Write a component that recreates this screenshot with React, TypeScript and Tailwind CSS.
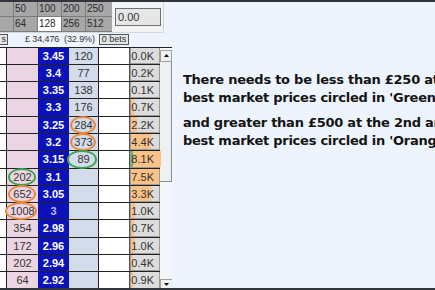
const rows = [
  { lay: '', price: '3.45', back: '120', vol: '0.0K', bar: 0 },
  { lay: '', price: '3.4', back: '77', vol: '0.2K', bar: 0 },
  { lay: '', price: '3.35', back: '138', vol: '0.1K', bar: 0 },
  { lay: '', price: '3.3', back: '176', vol: '0.7K', bar: 3 },
  { lay: '', price: '3.25', back: '284', vol: '2.2K', bar: 6, ring: 'back-o' },
  { lay: '', price: '3.2', back: '373', vol: '4.4K', bar: 20, ring: 'back-o' },
  { lay: '', price: '3.15', back: '89', vol: '8.1K', bar: 30, ring: 'back-g', green: true },
  { lay: '202', price: '3.1', back: '', vol: '7.5K', bar: 28, ring: 'lay-g' },
  { lay: '652', price: '3.05', back: '', vol: '3.3K', bar: 20, ring: 'lay-o' },
  { lay: '1008', price: '3', back: '', vol: '1.0K', bar: 4, ring: 'lay-o', last: true },
  { lay: '354', price: '2.98', back: '', vol: '0.7K', bar: 3 },
  { lay: '172', price: '2.96', back: '', vol: '1.0K', bar: 4 },
  { lay: '202', price: '2.94', back: '', vol: '0.4K', bar: 2 },
  { lay: '64', price: '2.92', back: '', vol: '0.9K', bar: 2 },
];

const Ring = ({ color, wide }: { color: 'o' | 'g'; wide?: boolean }) => (
  <span
    className={`absolute top-[-1px] bottom-[-1px] rounded-[50%] border-2 ${
      wide ? 'left-[-2px] right-[1px]' : 'left-[1px] right-[2px]'
    } ${color === 'o' ? 'border-[#ec8a3c]' : 'border-[#3ca34e]'}`}
  />
);

export default function App() {
  return (
    <div className="w-[435px] h-[290px] overflow-hidden bg-[#eef4fd] border-t-2 border-b-2 border-[#34343c] flex font-['Liberation_Sans',Arial,sans-serif]">
      {/* left ladder */}
      <div className="w-[172px] shrink-0 flex flex-col">
        <div className="h-[31px] w-[164px] bg-[#f2f3f5] border-r border-b border-[#d2d8e0] flex items-start">
          <div className="grid grid-cols-[13px_23px_23px_23px_26px] grid-rows-[14px_14px] gap-px bg-[#7c7c7c] pb-px text-[10px] text-[#2a2a2a] leading-[14px]">
            <div className="bg-[#a7a7a7]" />
            <div className="bg-[#a7a7a7] pl-[1px]">50</div>
            <div className="bg-[#a7a7a7] pl-[1px]">100</div>
            <div className="bg-[#a7a7a7] pl-[1px]">200</div>
            <div className="bg-[#a7a7a7] pl-[1px]">250</div>
            <div className="bg-[#a7a7a7]" />
            <div className="bg-[#a7a7a7] pl-[1px]">64</div>
            <div className="bg-white pl-[1px]">128</div>
            <div className="bg-[#a7a7a7] pl-[1px]">256</div>
            <div className="bg-[#a7a7a7] pl-[1px]">512</div>
          </div>
          <div className="ml-[3px] mt-[6px] w-[46px] h-[18px] bg-[#e6e6e6] border border-[#707070] text-[11px] text-[#333] leading-[16px] pl-[2px]">
            0.00
          </div>
        </div>
        <div className="h-[16px] flex items-center text-[9px] text-[#333]">
          <div className="w-[8px] h-[11px] bg-[#e6e6e6] border border-l-0 border-[#555] leading-[9px] text-right pr-[1px]">s</div>
          <div className="ml-[17px] w-[70px] whitespace-nowrap tracking-[-0.1px]">£ 34,476&nbsp; (32.9%)</div>
          <div className="ml-[4px] w-[30px] h-[11px] bg-[#e6e6e6] border border-[#555] leading-[9px] text-center">0 bets</div>
        </div>
        <div className="flex border-t border-[#222]">
          <div className="w-[160px] flex flex-col">
            {rows.map((r) => (
              <div key={r.price} className="h-[17.3px] flex text-[11px] leading-[16px] border-b border-[#222]">
                <div className="w-[7px] bg-white border-r border-[#222]" />
                <div className="w-[31px] bg-[#ecd5e3] text-center text-[#333] relative">
                  {r.lay}
                  {r.ring === 'lay-o' && <Ring color="o" wide={r.lay.length > 3} />}
                  {r.ring === 'lay-g' && <Ring color="g" />}
                </div>
                <div
                  className={`w-[31px] bg-[#0c12b9] text-center font-bold ${
                    r.last ? 'text-[#c7b5ff]' : 'text-white'
                  }`}
                >
                  {r.price}
                </div>
                <div className="w-[30px] bg-[#d3dcea] text-center text-[#333] relative border-r border-[#222]">
                  {r.back}
                  {r.ring === 'back-o' && <Ring color="o" />}
                  {r.ring === 'back-g' && <Ring color="g" wide />}
                </div>
                <div className="w-[31px] bg-white border-r border-[#555]" />
                <div className="w-[30px] bg-[#dcdcdc] border border-t-0 border-[#9a9a9a] relative text-[#333]">
                  <div className="absolute inset-y-0 left-0 bg-[#fbc186]" style={{ width: r.bar }} />
                  {r.green && <div className="absolute inset-y-0 left-0 w-[2px] bg-[#5fc25a]" />}
                  <span className="relative block text-right pr-[5px]">{r.vol}</span>
                </div>
              </div>
            ))}
          </div>
          {/* scrollbar */}
          <div className="w-[12px] flex flex-col bg-[#f4f6f9]">
            <div className="h-[12px] mt-[2px] border border-[#a0a0a0] bg-[#f0f0f0] flex items-center justify-center">
              <svg width="5" height="3" viewBox="0 0 5 3"><path d="M2.5 0 L5 3 L0 3 Z" fill="#111" /></svg>
            </div>
            <div className="h-[120px] border-r border-b border-[#8a8a8a] bg-[#eef0f3]" />
            <div className="flex-1" />
            <div className="h-[11px] border-l border-t border-[#a0a0a0] bg-[#f0f0f0] flex items-center justify-center">
              <svg width="5" height="3" viewBox="0 0 5 3"><path d="M0 0 L5 0 L2.5 3 Z" fill="#111" /></svg>
            </div>
          </div>
        </div>
      </div>

      {/* note */}
      <div className="flex-1 pl-[11px] pt-[69px] font-['DejaVu_Sans',Verdana,sans-serif] font-bold text-[13px] tracking-[-0.25px] leading-[18px] text-[#141414] whitespace-nowrap">
        <p>There needs to be less than £250 at the</p>
        <p>best market prices circled in 'Green'</p>
        <p className="mt-[7px]">and greater than £500 at the 2nd and 3rd</p>
        <p>best market prices circled in 'Orange'</p>
      </div>
    </div>
  );
}
